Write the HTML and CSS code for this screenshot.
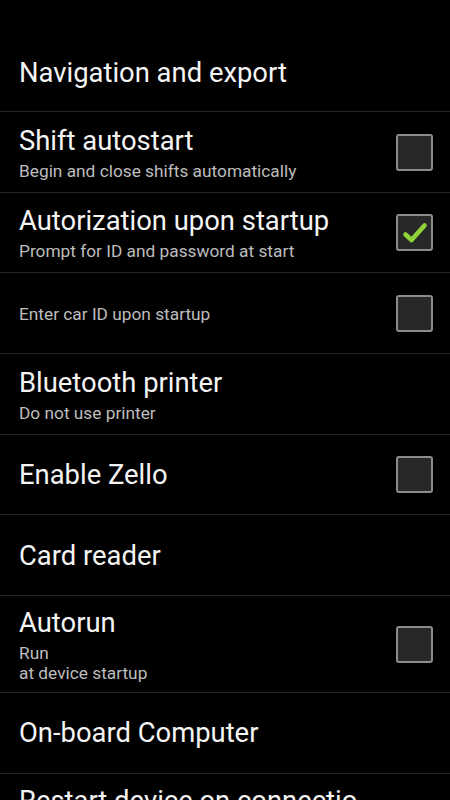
FILE: index.html
```html
<!DOCTYPE html>
<html lang="en">
<head>
  <meta charset="UTF-8">
  <title>Settings</title>
  <meta name="viewport" content="width=device-width, initial-scale=1">
  <link rel="stylesheet" href="styles.css">
</head>
<body>
  <div class="list">
    <div class="row top">
      <div class="text"><div class="title">Navigation and export</div></div>
    </div>
    <div class="row">
      <div class="text">
        <div class="title">Shift autostart</div>
        <div class="sub">Begin and close shifts automatically</div>
      </div>
      <span class="check"></span>
    </div>
    <div class="row">
      <div class="text">
        <div class="title">Autorization upon startup</div>
        <div class="sub">Prompt for ID and password at start</div>
      </div>
      <span class="check on">
        <svg viewBox="0 0 37 37" width="37" height="37"><path d="M9.5 20.5 L15.5 26 L28.5 11.5" fill="none" stroke="#8fd23a" stroke-width="4.6" stroke-linecap="round" stroke-linejoin="round"/></svg>
      </span>
    </div>
    <div class="row">
      <div class="text"><div class="sub">Enter car ID upon startup</div></div>
      <span class="check"></span>
    </div>
    <div class="row">
      <div class="text">
        <div class="title">Bluetooth printer</div>
        <div class="sub">Do not use printer</div>
      </div>
    </div>
    <div class="row">
      <div class="text"><div class="title">Enable Zello</div></div>
      <span class="check"></span>
    </div>
    <div class="row">
      <div class="text"><div class="title">Card reader</div></div>
    </div>
    <div class="row">
      <div class="text">
        <div class="title">Autorun</div>
        <div class="sub">Run<br>at device startup</div>
      </div>
      <span class="check"></span>
    </div>
    <div class="row">
      <div class="text"><div class="title">On-board Computer</div></div>
    </div>
    <div class="row last">
      <div class="text"><div class="title">Restart device on connection loss</div></div>
    </div>
  </div>
</body>
</html>
```

FILE: styles.css
```css
html, body {
  margin: 0;
  background: #000;
  height: 800px;
  overflow: hidden;
}
body {
  font-family: Roboto, 'Noto Sans', sans-serif;
  color: #f4f4f4;
}
.row {
  display: flex;
  align-items: center;
  box-sizing: border-box;
  min-height: 80.67px;
  padding: 9px 17px 9px 19px;
  border-bottom: 1px solid #262626;
}
.row.top {
  height: 112px;
  align-items: flex-end;
  padding-bottom: 21px;
}
.row.top .text {
  padding-top: 0;
}
.text {
  flex: 1;
  padding-top: 1px;
}
.title {
  font-size: 27.4px;
  line-height: 34px;
}
.sub {
  font-size: 17.3px;
  line-height: 20px;
  color: #bdbdbd;
}
.title + .sub {
  margin-top: 3px;
}
.row.last {
  align-items: flex-start;
}
.row.last .title {
  max-width: 345px;
  word-break: break-all;
}
.check {
  width: 37px;
  height: 37px;
  box-sizing: border-box;
  border: 2px solid #8c8c8c;
  border-radius: 3px;
  background: #282828;
  flex-shrink: 0;
  position: relative;
  margin-top: 1px;
}
.check svg {
  position: absolute;
  left: -2px;
  top: -2px;
}
```
